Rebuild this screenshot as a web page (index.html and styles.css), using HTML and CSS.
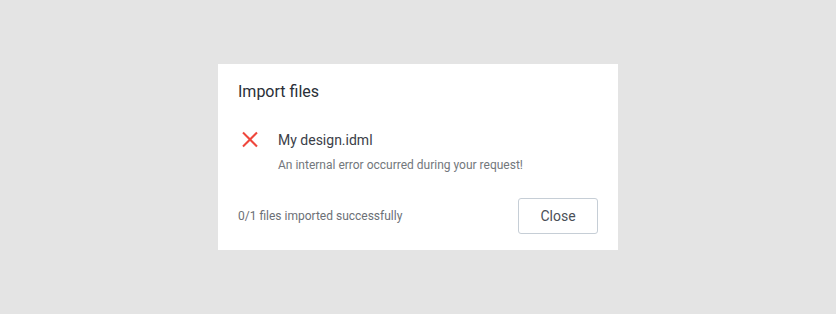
FILE: index.html
```html
<!DOCTYPE html>
<html>
<head>
    <title>Import files</title>
    <link rel="stylesheet" href="styles.css">
</head>
<body>
    <div class="dialog">
        <h2 class="dialog-title">Import files</h2>

        <!-- Список файлов -->
        <div class="file-item">
            <svg class="status-icon" width="24" height="20" viewBox="0 0 24 20">
                <line x1="5" y1="2.5" x2="19" y2="16.5" stroke="#ef473c" stroke-width="2"/>
                <line x1="19" y1="2.5" x2="5" y2="16.5" stroke="#ef473c" stroke-width="2"/>
            </svg>
            <div class="file-info">
                <div class="file-name">My design.idml</div>
                <div class="file-error">An internal error occurred during your request!</div>
            </div>
        </div>

        <div class="dialog-footer">
            <span class="summary">0/1 files imported successfully</span>
            <button class="close-btn">Close</button>
        </div>
    </div>
</body>
</html>
```

FILE: styles.css
```css
body {
    display: flex;
    justify-content: center;
    align-items: center;
    height: 100vh;
    margin: 0;
    background: #e4e4e4;
    font-family: Roboto, "Liberation Sans", sans-serif;
}
.dialog {
    width: 400px;
    box-sizing: border-box;
    padding: 16px 20px;
    background: #fff;
}
.dialog-title {
    margin: 0;
    font-size: 16px;
    line-height: 24px;
    font-weight: 400;
    color: #2a2f37;
}
.file-item {
    display: flex;
    margin-top: 26px;
}
.status-icon {
    display: block;
    width: 24px;
    height: 20px;
    margin-right: 16px;
    flex-shrink: 0;
}
.file-name {
    font-size: 14px;
    line-height: 20px;
    color: #3b4048;
}
.file-error {
    margin-top: 7px;
    font-size: 12px;
    line-height: 16px;
    color: #73777c;
}
.dialog-footer {
    display: flex;
    justify-content: space-between;
    align-items: center;
    margin-top: 25px;
}
.summary {
    font-size: 12px;
    line-height: 16px;
    color: #6c7076;
}
.close-btn {
    width: 80px;
    height: 36px;
    padding: 0;
    background: #fff;
    border: 1px solid #c6ced6;
    border-radius: 3px;
    font-family: inherit;
    font-size: 14px;
    line-height: 20px;
    color: #4a4f57;
    cursor: pointer;
}
```
